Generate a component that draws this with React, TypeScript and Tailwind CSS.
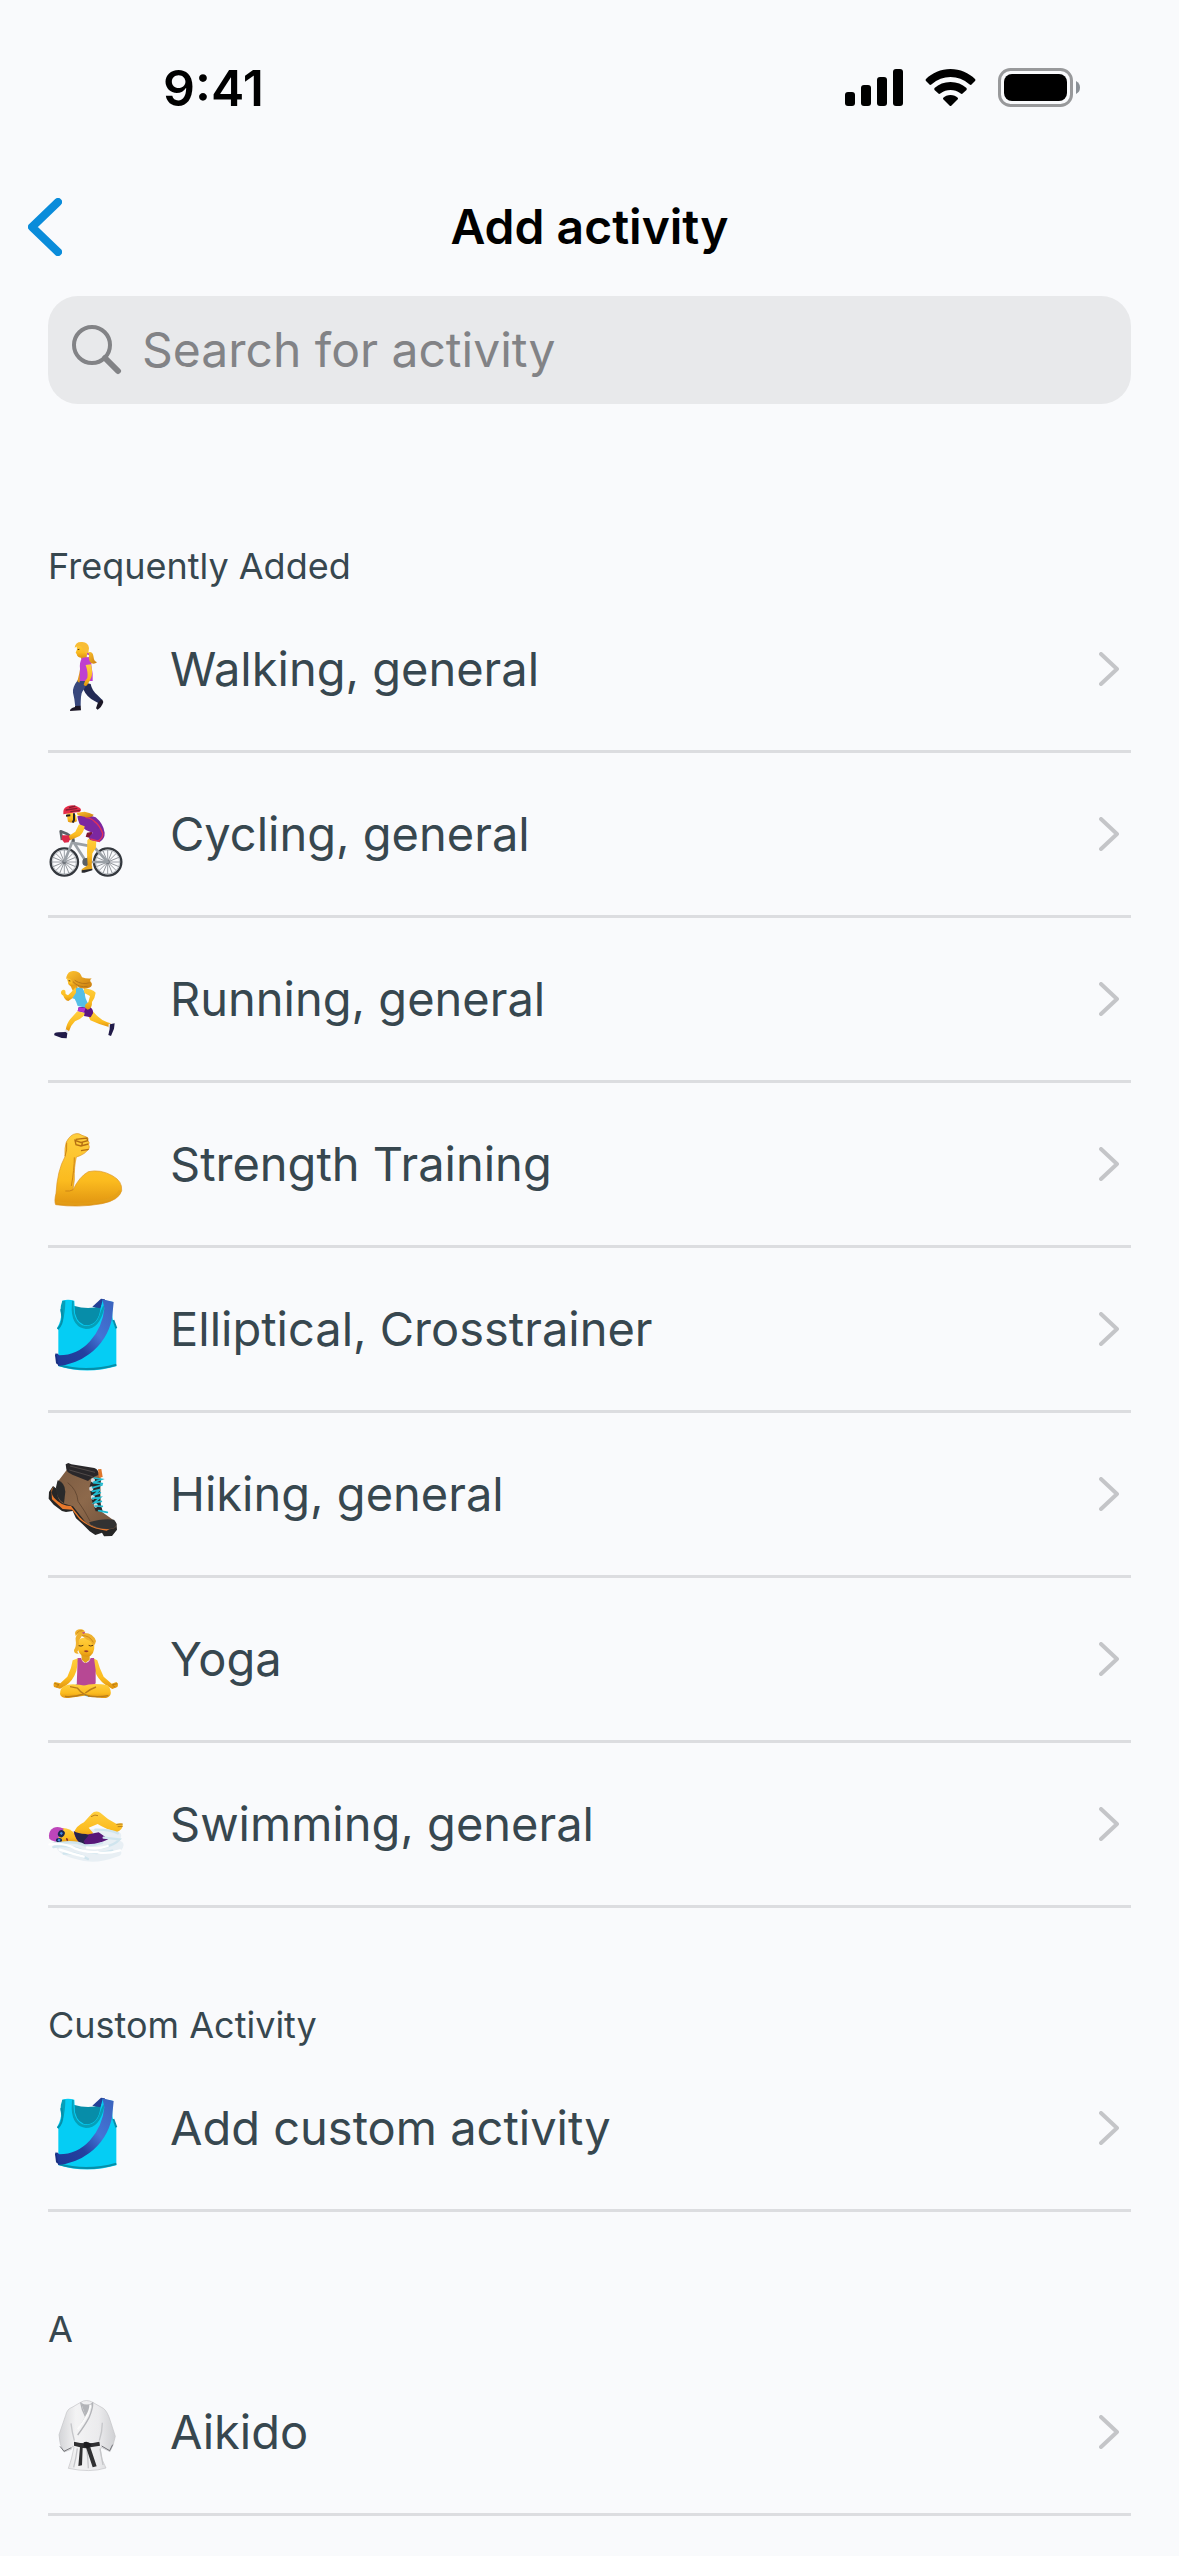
import { useState } from 'react';
import type { ReactNode } from 'react';

interface Activity {
  name: string;
  icon: ReactNode;
}

interface Section {
  title: string;
  activities: Activity[];
}

const SPOKES = [0, 22.5, 45, 67.5, 90, 112.5, 135, 157.5];

function Emoji({ top = 36, children }: { top?: number; children: ReactNode }) {
  return (
    <svg viewBox={`24 ${top} 228 228`} className="size-[76px]" aria-hidden="true">
      {children}
    </svg>
  );
}

// Gradients shared by all of the activity icons
function EmojiGradients() {
  return (
    <svg className="absolute size-0" aria-hidden="true">
      <defs>
        <linearGradient id="skin" x1="0" y1="0" x2="0" y2="1">
          <stop offset="0" stopColor="#ffcf3f" />
          <stop offset="0.65" stopColor="#fbbb1f" />
          <stop offset="1" stopColor="#df9210" />
        </linearGradient>
        <linearGradient id="hair" x1="0" y1="0" x2="1" y2="1">
          <stop offset="0" stopColor="#ffc42f" />
          <stop offset="1" stopColor="#c97c10" />
        </linearGradient>
        <linearGradient id="sash" x1="0" y1="1" x2="1" y2="0">
          <stop offset="0" stopColor="#1d3796" />
          <stop offset="0.35" stopColor="#24409f" />
          <stop offset="0.6" stopColor="#4374d6" />
          <stop offset="1" stopColor="#3a62bd" />
        </linearGradient>
        <linearGradient id="leather" x1="0" y1="0" x2="1" y2="1">
          <stop offset="0" stopColor="#7a5a41" />
          <stop offset="0.5" stopColor="#8d694b" />
          <stop offset="1" stopColor="#6f513b" />
        </linearGradient>
        <linearGradient id="cloth" x1="0" y1="0" x2="1" y2="0">
          <stop offset="0" stopColor="#d3d4d7" />
          <stop offset="0.3" stopColor="#f3f3f4" />
          <stop offset="0.7" stopColor="#ebebed" />
          <stop offset="1" stopColor="#cfd0d3" />
        </linearGradient>
      </defs>
    </svg>
  );
}

function WalkingIcon() {
  return (
    <Emoji top={51}>
      <path d="M128 186L152 192Q156 212 172 225L187 240L180 252L165 244Q140 232 130 208Z" fill="#232a55" />
      <path d="M187 239L190 246Q185 262 173 269L168 265L173 250L182 240Z" fill="#1c1726" />
      <path d="M113 181L142 183Q138 202 127 215Q122 222 122 259L106 261Q104 236 99 218Q97 202 113 181Z" fill="#38477c" />
      <path d="M105 258L122 257L123 271L90 273Q89 266 105 261Z" fill="#1c1726" />
      <path d="M122 138L118 160L112 184L118 188L128 156Z" fill="#e39d17" />
      <path d="M119 100H141L140 118H124Z" fill="#e69e16" />
      <path d="M126 113L146 111Q155 121 154 136L158 161V183H119L120 145Q118 127 126 113Z" fill="#bf3fd0" />
      <path d="M137 135L153 133Q159 158 154 172Q149 184 143 193Q138 202 131 194Q133 183 142 174Q145 158 137 135Z" fill="url(#skin)" />
      <path d="M109 76Q120 66 139 71L143 94Q141 109 126 113Q111 113 110 102L107 98L111 88Z" fill="url(#skin)" />
      <path d="M104 83Q106 64 127 66Q145 67 147 84Q147 98 141 104L132 92L123 79Q113 76 104 83Z" fill="#f8bd36" />
      <path d="M142 98Q157 92 160 107L162 118Q164 126 171 127Q164 134 154 130Q145 123 147 106Z" fill="url(#hair)" />
      <path d="M142 98L148 101L145 106L141 103Z" fill="#b136c3" />
      <path d="M113 89L118 88" stroke="#55330e" strokeWidth="3" />
    </Emoji>
  );
}

function Wheel({ cx }: { cx: number }) {
  return (
    <g>
      <circle cx={cx} cy={216} r={41} fill="none" stroke="#34383e" strokeWidth={7} />
      <circle cx={cx} cy={216} r={36} fill="none" stroke="#a5aab0" strokeWidth={2} />
      {SPOKES.map((angle) => (
        <path
          key={angle}
          d={`M${cx - 36} 216H${cx + 36}`}
          stroke="#6e747b"
          strokeWidth={2}
          transform={`rotate(${angle} ${cx} 216)`}
        />
      ))}
      <circle cx={cx} cy={216} r={6} fill="#6e737a" />
    </g>
  );
}

function CyclingIcon() {
  return (
    <Emoji>
      <Wheel cx={73} />
      <Wheel cx={203} />
      <path d="M73 216L98 152L139 216H203L161 170L139 216M95 158L155 169" fill="none" stroke="#9aa0a6" strokeWidth="8" strokeLinejoin="round" />
      <path d="M66 150L62 124L82 132L99 144L101 155" fill="none" stroke="#5b6167" strokeWidth="8" strokeLinejoin="round" />
      <circle cx="139" cy="216" r="12" fill="#595f65" />
      <path d="M141 128L157 125L158 146L137 140Z" fill="#7c1632" />
      <path d="M142 151Q150 136 169 146L168 173L157 190L155 228L143 229L141 186Z" fill="url(#skin)" />
      <path d="M143 226L156 227L157 239L126 246L125 238Z" fill="#e2a31a" />
      <path d="M125 241L157 236V241L133 248H125Z" fill="#292a2f" />
      <path d="M112 79Q140 71 167 82Q190 101 194 128Q195 146 179 156L151 150Q141 143 159 128Q134 120 130 113Q116 107 112 79Z" fill="#7c27a0" />
      <path d="M136 82Q154 84 163 94M163 94Q179 105 188 130Q189 144 174 153M151 147L180 155" fill="none" stroke="#df315b" strokeWidth="4" />
      <path d="M117 103L134 109Q132 126 119 138L90 151L80 142L106 125Z" fill="url(#skin)" />
      <path d="M66 136L86 136L90 148L86 157L73 158L65 148Z" fill="#dc2949" />
      <path d="M80 72Q93 62 108 75L111 94Q98 101 84 95Z" fill="url(#skin)" />
      <path d="M110 68L134 65Q148 68 161 74Q156 83 139 82L113 76Z" fill="url(#hair)" />
      <path d="M70 73Q67 54 84 48Q103 41 120 54Q127 62 118 66L94 69Z" fill="#e52d49" />
      <path d="M77 60L112 55M87 53L106 48M91 65L120 61" stroke="#851c30" strokeWidth="4" />
      <path d="M78 77L91 76M102 70V90L98 98" fill="none" stroke="#252229" strokeWidth="6" />
    </Emoji>
  );
}

function RunningIcon() {
  return (
    <Emoji top={21}>
      <path d="M143 164L158 153Q180 180 202 187L212 190L209 202Q176 193 151 181Z" fill="url(#skin)" />
      <path d="M206 191L216 192L212 206L205 204Z" fill="#e6e7ee" />
      <path d="M210 193L224 190L222 206L213 228L205 225L209 207Z" fill="#221b49" />
      <path d="M112 154L137 159Q126 177 105 184Q93 195 87 214L77 210Q80 190 91 177Z" fill="url(#skin)" />
      <path d="M78 208L88 214L80 222L71 217Z" fill="#e6e7ee" />
      <path d="M77 216L82 220L80 235L65 234L43 226Q40 217 55 217Z" fill="#221b49" />
      <path d="M88 70L107 70L116 89L99 94Z" fill="#e7a11a" />
      <path d="M107 82Q94 97 84 106L77 102L76 92Q71 86 64 93Q60 102 70 107Q74 120 85 123Q98 117 109 101Z" fill="url(#skin)" />
      <path d="M116 142L146 139Q161 146 159 160L152 172L132 168L134 158L113 153Z" fill="#5b1682" />
      <path d="M116 142L137 144L132 157L113 153Z" fill="#b32fd1" />
      <path d="M108 85L125 80L135 98Q132 112 148 136L141 144L113 138Q109 125 104 117L97 115L108 98Z" fill="#55bee6" />
      <path d="M131 84Q158 87 167 98Q165 114 156 126Q157 145 143 149Q131 144 137 133L145 127L150 108L133 99Z" fill="url(#skin)" />
      <path d="M81 57Q95 44 111 54L110 74L97 79Q84 78 84 67Z" fill="url(#skin)" />
      <path d="M79 51Q85 28 108 34Q121 36 126 52Q140 57 155 55Q146 62 155 69Q158 80 147 83Q126 90 104 76Q94 68 94 60Q86 53 79 57Z" fill="url(#hair)" />
      <path d="M104 61Q127 76 149 68M99 65Q116 84 143 79" fill="none" stroke="#b87717" strokeWidth="3" />
      <path d="M86 62L91 63" stroke="#55330e" strokeWidth="3" />
    </Emoji>
  );
}

function MuscleIcon() {
  return (
    <Emoji>
      <path d="M79 66Q91 43 108 41Q117 39 126 46L140 51Q147 55 143 62Q150 66 146 74Q150 80 146 88L133 100Q121 108 109 111Q102 139 103 181Q101 195 99 209Q119 169 145 155Q181 147 217 167Q248 184 245 212Q237 241 186 251Q115 264 47 254Q42 244 48 220Q52 151 75 110Q73 83 79 66Z" fill="url(#skin)" stroke="#dc9420" strokeWidth="2" />
      <path d="M80 68Q82 91 75 109M103 112Q103 147 94 198M100 209Q89 215 76 213" fill="none" stroke="#cd8516" strokeWidth="3" />
      <path d="M107 58L141 54L143 62L124 67M145 72L123 78L108 74L105 61L127 69L125 77M146 88L123 92" fill="none" stroke="#b56f12" strokeWidth="4" />
      <path d="M49 246Q121 260 192 242Q229 232 240 212" fill="none" stroke="#e2a01b" strokeWidth="7" opacity="0.6" />
    </Emoji>
  );
}

function ShirtIcon() {
  return (
    <Emoji>
      <path d="M101 62Q145 76 180 63L188 65Q181 125 142 126Q101 125 94 66Z" fill="#078da9" />
      <path d="M157 65L183 41L195 43L181 70Z" fill="#233f95" />
      <path d="M67 47Q83 42 103 47L105 85Q114 121 143 121Q175 117 181 73L188 45L219 51Q211 103 229 130V244Q139 270 55 243V134L51 130Q67 102 64 70Z" fill="#05cdf4" />
      <path d="M67 47Q55 79 69 104Q76 80 76 47ZM96 47L101 48Q100 69 102 83Q110 122 141 123Q173 120 182 79L190 61L193 68Q179 132 138 132Q98 127 95 75Z" fill="#069fb9" />
      <path d="M64 72Q74 111 53 132M220 105L229 130M55 240Q139 265 229 239" fill="none" stroke="#058faa" strokeWidth="6" />
      <path d="M187 43L221 51L216 101Q202 166 148 207Q108 237 55 243L46 209L51 205L58 211Q112 211 150 169Q188 126 193 70Z" fill="url(#sash)" />
      <path d="M48 203L56 241L48 235L45 211Z" fill="#182f80" />
    </Emoji>
  );
}

function BootIcon() {
  return (
    <Emoji>
      <path d="M39 108L27 126L26 146L41 164L66 183L78 186L98 183L108 205L128 223L149 244L166 255L186 248L192 259L216 258L231 239L229 219L132 178Z" fill="#262626" />
      <path d="M43 107Q28 128 42 143Q64 168 93 168L118 200Q143 227 177 233L210 236L200 242Q155 238 120 209L96 179L68 177L36 148L34 119Z" fill="#e8792c" />
      <path d="M76 65L89 47L173 67L182 67L181 182L224 213Q236 231 220 236Q172 243 138 218L99 169L68 160Q45 147 52 97Z" fill="url(#leather)" />
      <path d="M53 91Q75 98 76 125L72 160Q48 147 48 112Z" fill="#292a2b" />
      <path d="M147 217Q189 204 222 209Q236 223 222 235Q182 242 151 223Z" fill="#323232" />
      <path d="M79 58L77 43L85 39L94 43L163 54Q177 59 175 75L155 83L144 93L97 74L83 66Z" fill="#29272a" />
      <path d="M90 48L165 67M88 60L158 80" stroke="#514a49" strokeWidth="3" />
      <path d="M174 58L184 57L188 81L177 83Z" fill="#df762b" />
      <path d="M157 83L183 88L179 119L182 162L188 184L167 184L156 152L149 109Z" fill="#282a2c" />
      <path d="M159 90L153 112L157 135L163 159L177 181" fill="none" stroke="#d9dde0" strokeWidth="12" strokeLinecap="round" strokeDasharray="2 24" />
      <path d="M163 84L185 88L159 98L187 101M158 113L186 105M157 124L180 119L160 136L181 128M158 145L181 142L163 158L184 154M165 168L187 169M176 182L202 187" fill="none" stroke="#21bbd0" strokeWidth="5" strokeLinecap="round" />
      <path d="M83 98Q111 119 114 154Q135 183 150 213" fill="none" stroke="#654933" strokeWidth="3" />
    </Emoji>
  );
}

function YogaIcon() {
  return (
    <Emoji>
      <path d="M116 129L98 136Q95 161 82 185L61 205L45 201Q38 205 42 216L60 221L75 214Q99 198 109 168M158 129L172 136Q178 160 191 185L215 206L229 201Q237 206 232 216L217 222L197 210Q172 193 164 166" fill="url(#skin)" />
      <path d="M43 205L57 209L49 216M232 206L217 209L225 217" fill="none" stroke="#b87a17" strokeWidth="3" />
      <path d="M107 208L168 207L164 239L146 245L108 236Z" fill="#43a7d8" />
      <path d="M124 112H149V134L136 144L125 134Z" fill="#e2a01a" />
      <path d="M113 129H123Q127 143 136 144Q148 142 152 129H162L167 165V205Q161 214 146 215H110Z" fill="#b74894" />
      <path d="M128 213Q159 202 203 211Q216 226 211 240Q205 251 186 249Q150 246 131 235Z" fill="url(#skin)" />
      <path d="M142 214Q92 201 71 214Q60 221 60 237Q63 251 86 249L133 242L155 233Q166 218 193 209Q160 211 142 214Z" fill="url(#skin)" />
      <path d="M90 215L112 219Q128 240 150 243M168 216Q151 222 136 234M75 244Q101 247 131 237M144 243Q175 248 205 242" fill="none" stroke="#b97d1b" strokeWidth="4" />
      <path d="M112 77Q134 59 160 75Q169 108 152 122Q138 128 124 121Q111 110 112 77Z" fill="url(#skin)" />
      <path d="M105 54Q108 41 124 43Q136 45 134 54Q159 54 168 78Q166 90 159 94Q156 77 141 74L126 62L116 78Q120 101 112 110L116 116Q101 117 102 105Q110 93 107 75Q105 64 115 56L107 63Z" fill="#efb12e" />
      <path d="M110 55Q117 45 128 47M126 62Q149 61 160 82" fill="none" stroke="#cd8b1b" strokeWidth="3" />
      <path d="M125 53L136 50L132 57Z" fill="#b44393" />
      <path d="M116 92Q123 95 130 91M146 91Q152 95 159 91" fill="none" stroke="#59380e" strokeWidth="3" />
      <path d="M131 108Q138 104 146 108Q140 116 131 108Z" fill="#9a3e2a" />
    </Emoji>
  );
}

function SwimmingIcon() {
  return (
    <Emoji>
      <path d="M34 190Q91 151 157 148L229 151Q254 162 237 181Q262 190 242 212Q250 226 228 231Q163 256 107 237Q57 225 48 200Z" fill="#e8eff4" />
      <path d="M102 161Q105 139 132 127L155 101Q166 89 181 98Q203 119 230 132Q243 128 248 132Q249 150 230 156Q198 148 173 132L146 143L160 160L118 179Z" fill="url(#skin)" />
      <path d="M229 133L248 132M233 140L248 139M153 110Q166 102 174 107" fill="none" stroke="#bc811e" strokeWidth="3" />
      <path d="M59 145Q85 139 106 162L117 185L72 190L54 182Z" fill="url(#skin)" />
      <path d="M28 176Q23 153 41 143Q56 138 71 146L66 158L47 185L34 181Z" fill="#bd45ba" />
      <path d="M101 152Q109 165 135 165L176 157Q189 166 205 178Q190 185 165 194H127Q105 182 101 152Z" fill="#571779" />
      <path d="M102 154Q112 161 138 162L146 166L131 184L136 194L119 189Q106 175 102 154Z" fill="#26244c" />
      <ellipse cx="64" cy="161" rx="10" ry="11" fill="#192852" transform="rotate(30 64 161)" />
      <ellipse cx="57" cy="181" rx="9" ry="7" fill="#192852" />
      <path d="M61 158L67 162M54 179L60 182" stroke="#458ae0" strokeWidth="7" />
      <path d="M78 174Q86 174 84 183Q77 183 78 174Z" fill="#8f342b" />
      <path d="M42 192Q104 180 133 196Q158 198 186 189M40 201Q88 192 132 213Q169 226 217 212M71 221Q106 215 144 237M166 149Q210 148 234 160M191 173L239 178Q224 196 188 203" fill="none" stroke="#d0e5ee" strokeWidth="7" strokeLinecap="round" />
      <path d="M28 193Q73 187 104 205Q144 219 173 216M59 209Q98 222 131 230M141 203Q178 208 203 198M176 218Q206 221 240 211" fill="none" stroke="#fff" strokeWidth="7" strokeLinecap="round" />
    </Emoji>
  );
}

function KimonoIcon() {
  return (
    <Emoji>
      <path d="M122 43Q139 32 158 43L190 61Q203 70 212 102L226 145Q221 172 210 191L184 178L181 186Q182 214 198 240Q151 255 85 241Q95 216 102 177L98 174L94 184L72 192Q57 169 57 140L77 82Q81 63 96 58Z" fill="url(#cloth)" stroke="#c2c3c6" strokeWidth="2" />
      <path d="M123 44Q142 55 157 44L150 70L137 85Z" fill="#b3b4b8" />
      <path d="M122 43Q125 65 137 87L120 116M158 43Q159 62 147 89Q135 112 113 141" fill="none" stroke="#b3b4b8" strokeWidth="4" />
      <path d="M151 50Q152 65 138 88Q129 105 113 124" fill="none" stroke="#fafafa" strokeWidth="6" />
      <path d="M93 106Q96 132 103 158M187 104Q187 130 178 158M139 167Q144 213 145 241M112 181Q108 211 101 238M180 182L189 231" fill="none" stroke="#c5c6c9" strokeWidth="4" />
      <path d="M60 175L72 190L94 179M185 174L209 188L218 170" fill="none" stroke="#717277" strokeWidth="3" />
      <path d="M102 161Q139 171 178 161L180 173L151 178L170 235L158 238L139 181L128 180L126 232L115 234L120 178L102 173Z" fill="#303032" />
      <path d="M131 163Q143 157 155 170L143 182L131 175Z" fill="#1d1d20" />
    </Emoji>
  );
}

const sections: Section[] = [
  {
    title: 'Frequently Added',
    activities: [
      { name: 'Walking, general', icon: <WalkingIcon /> },
      { name: 'Cycling, general', icon: <CyclingIcon /> },
      { name: 'Running, general', icon: <RunningIcon /> },
      { name: 'Strength Training', icon: <MuscleIcon /> },
      { name: 'Elliptical, Crosstrainer', icon: <ShirtIcon /> },
      { name: 'Hiking, general', icon: <BootIcon /> },
      { name: 'Yoga', icon: <YogaIcon /> },
      { name: 'Swimming, general', icon: <SwimmingIcon /> },
    ],
  },
  {
    title: 'Custom Activity',
    activities: [{ name: 'Add custom activity', icon: <ShirtIcon /> }],
  },
  {
    title: 'A',
    activities: [{ name: 'Aikido', icon: <KimonoIcon /> }],
  },
];

function StatusBar() {
  return (
    <div className="flex h-44 items-center justify-between pr-[98px] pl-[163px]">
      <span className="text-[50px] leading-none font-semibold">9:41</span>
      <div className="flex items-center gap-[22px]">
        <svg viewBox="0 0 58 38" className="h-[38px] w-[58px]" aria-hidden="true">
          <rect x="0" y="23" width="10" height="14" rx="3" />
          <rect x="16" y="16" width="10" height="21" rx="3" />
          <rect x="32" y="8" width="10" height="29" rx="3" />
          <rect x="48" y="0" width="10" height="37" rx="3" />
        </svg>
        <svg viewBox="0 0 51 38" className="h-[38px] w-[51px]" aria-hidden="true">
          <path d="M25.5 0C35 0 44 4 50 10Q51 11 50 12L46 16Q45 16 44 15Q36 8 25.5 8Q15 8 7 15Q6 16 5 16L1 12Q0 11 1 10C7 4 16 0 25.5 0Z" />
          <path d="M25.5 13C32 13 37 15 41.5 19Q42 20 41.5 21L37 25Q36 25 35 24Q31 21 25.5 21Q20 21 16 24Q15 25 14 25L9.5 21Q9 20 9.5 19C14 15 19 13 25.5 13Z" />
          <path d="M25.5 26Q30 26 33 29Q33 30 32.5 30.5L26.5 36.5Q25.5 37.5 24.5 36.5L18.5 30.5Q18 30 18 29Q21 26 25.5 26Z" />
        </svg>
        <svg viewBox="0 0 83 40" className="h-10 w-[83px]" aria-hidden="true">
          <rect x="1.5" y="1.5" width="72" height="36" rx="11" fill="none" stroke="#98999b" strokeWidth="3" />
          <rect x="6" y="6" width="63" height="27" rx="8" />
          <path d="M78 13Q82 15 82 19.5Q82 24 78 26Z" fill="#8a9096" />
        </svg>
      </div>
    </div>
  );
}

function ActivityRow({ activity }: { activity: Activity }) {
  return (
    <li>
      <button type="button" className="flex h-[165px] w-full items-center border-b-[3px] border-[#dcdde0] text-left">
        <span className="pt-3">{activity.icon}</span>
        <span className="flex-1 pb-0.5 pl-[46px] text-[47px] leading-none">{activity.name}</span>
        <svg viewBox="0 0 20 34" className="mr-3 h-[34px] w-5" aria-hidden="true">
          <path d="M2 2L18 17L2 32" fill="none" stroke="#c4c5c8" strokeWidth="4" strokeLinecap="round" strokeLinejoin="round" />
        </svg>
      </button>
    </li>
  );
}

export default function App() {
  const [query, setQuery] = useState('');

  const visibleSections = sections
    .map((section) => ({
      ...section,
      activities: section.activities.filter((a) => a.name.toLowerCase().includes(query.trim().toLowerCase())),
    }))
    .filter((section) => section.activities.length > 0);

  return (
    <div className="min-h-screen bg-[#f9fafc] font-['Inter',sans-serif] text-black">
      <EmojiGradients />
      <StatusBar />

      <header className="grid h-[120px] grid-cols-[1fr_auto_1fr] items-start px-7 pt-[22px]">
        <button type="button" aria-label="Back" className="w-[34px]">
          <svg viewBox="0 0 34 58" className="h-[58px] w-[34px]" aria-hidden="true">
            <path d="M30 4L4 29L30 54" fill="none" stroke="#0a8cda" strokeWidth="8" strokeLinecap="round" strokeLinejoin="round" />
          </svg>
        </button>
        <h1 className="text-[48px] leading-[58px] font-semibold">Add activity</h1>
      </header>

      <main className="px-12">
        <label className="flex h-[108px] items-center gap-5 rounded-[30px] bg-[#e8e9eb] px-6">
          <svg viewBox="0 0 50 50" className="size-[50px]" aria-hidden="true">
            <circle cx="20" cy="20" r="18" fill="none" stroke="#828386" strokeWidth="4" />
            <path d="M33 33L46 46" stroke="#828386" strokeWidth="6" strokeLinecap="round" />
          </svg>
          <input
            type="text"
            value={query}
            onChange={(e) => setQuery(e.target.value)}
            placeholder="Search for activity"
            aria-label="Search for activity"
            className="min-w-0 flex-1 bg-transparent text-[48px] leading-[60px] outline-none placeholder:text-[#828386]"
          />
        </label>

        <div className="pt-[45px] text-[#37474f]">
          {visibleSections.map((section) => (
            <section key={section.title}>
              <h2 className="flex h-[139px] items-end text-[36px] leading-[44px]">{section.title}</h2>
              <ul>
                {section.activities.map((activity) => (
                  <ActivityRow key={activity.name} activity={activity} />
                ))}
              </ul>
            </section>
          ))}
        </div>
      </main>
    </div>
  );
}
